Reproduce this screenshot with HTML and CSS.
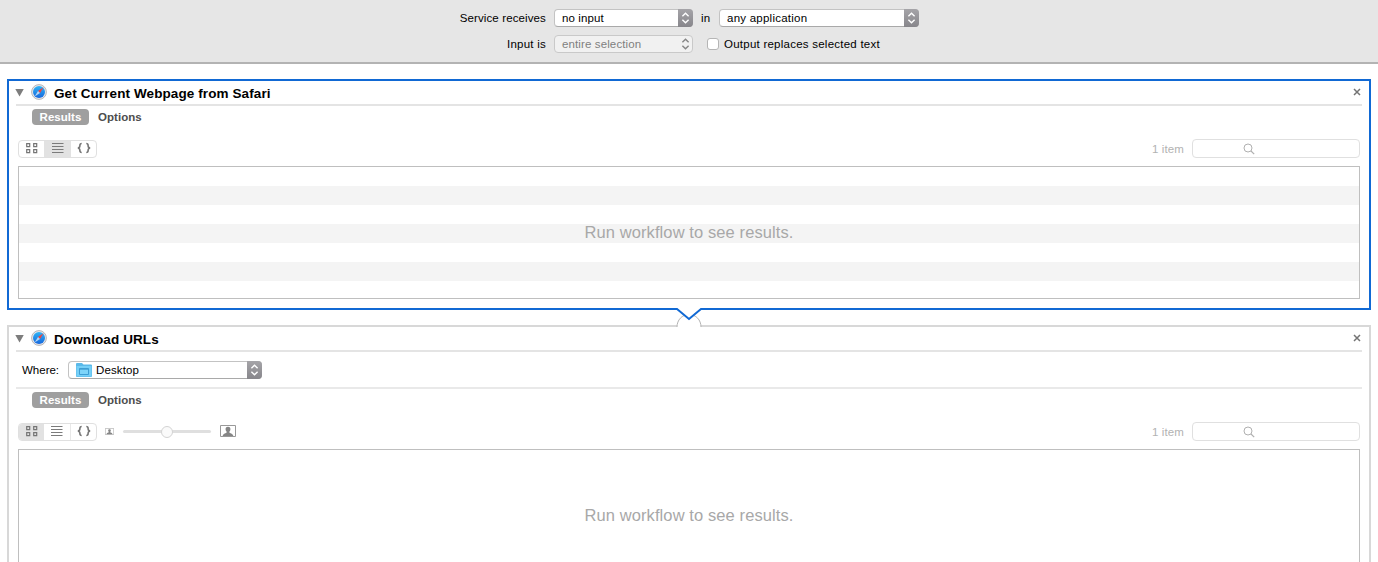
FILE: index.html
```html
<!DOCTYPE html>
<html lang="en">
<head>
<meta charset="utf-8">
<title>Automator</title>
<link rel="stylesheet" href="styles.css">
</head>
<body>
<svg class="defs" aria-hidden="true">
  <defs>
    <linearGradient id="blue" x1="0" y1="0" x2="0" y2="1"><stop offset="0" stop-color="#2fb4f6"/><stop offset="1" stop-color="#1767dc"/></linearGradient>
    <symbol id="safari" viewBox="0 0 16 16">
      <circle cx="8" cy="8" r="7.4" fill="#e9e9ec" stroke="#a5a5aa" stroke-width=".8"/>
      <circle cx="8" cy="8" r="6" fill="url(#blue)"/>
      <path d="M12.500 3.300 9 9 7 7z" fill="#f4433c"/>
      <path d="M3.700 12.600 7 7l2 2z" fill="#b5d5f5"/>
    </symbol>
    <symbol id="updown" viewBox="0 0 15 18"><path d="M4.4 7.3 7.5 4.3l3.1 3M4.4 10.7l3.1 3 3.1-3" fill="none" stroke="currentColor" stroke-width="1.4"/></symbol>
    <symbol id="grid" viewBox="0 0 12 12"><path d="M.7 1.700h3v3h-3zM7.700 1.700h3v3h-3zM.7 7.700h3v3h-3zM7.700 7.700h3v3h-3z" fill="none" stroke="#757575" stroke-width="1.200"/></symbol>
    <symbol id="list" viewBox="0 0 12 12"><path d="M0 1.500h11.500M0 4.500h11.500M0 7.500h11.500M0 10.500h11.500" stroke="#7b7b7b" stroke-width="1"/></symbol>
    <symbol id="braces" viewBox="0 0 14 12"><path d="M4.700 1.500C3 1.500 2.900 2 2.900 3.500S2.500 5.900.8 6c1.700.1 2.100 1 2.100 2.500s.1 2 1.800 2M9.300 1.500c1.700 0 1.800.5 1.800 2s.4 2.400 2.100 2.500c-1.700.1-2.100 1-2.100 2.500s-.1 2-1.800 2" fill="none" stroke="#777" stroke-width="1.600"/></symbol>
    <symbol id="search" viewBox="0 0 12 12"><circle cx="5" cy="5" r="4" fill="none" stroke="#b0b0b0"/><path d="m8 8 3.200 3.200" stroke="#b0b0b0" stroke-width="1.200"/></symbol>
    <symbol id="close" viewBox="0 0 8 8"><path d="m1 1 6 6M7 1 1 7" stroke="#747474" stroke-width="1.500"/></symbol>
    <symbol id="person" viewBox="0 0 16 12"><path d="M.5.5h15v11H.5z" fill="#fff" stroke="#999"/><path d="M8 1.800c1.900 0 2.500 1.200 2.400 2.600-.1 1.100-.5 1.700-1 2.200v.9c.2.700 3.600.8 3.900 3.500H2.700c.3-2.700 3.700-2.800 3.900-3.500v-.9c-.5-.5-.9-1.100-1-2.200C5.500 3 6.100 1.800 8 1.800z" fill="#858585"/></symbol>
  </defs>
</svg>

<header class="service">
  <div class="service-row">
    <span class="service-label">Service receives</span>
    <div class="popup input-popup"><span class="popup-text">no input</span><span class="stepper"><svg><use href="#updown"/></svg></span></div>
    <span class="in-label">in</span>
    <div class="popup app-popup"><span class="popup-text wide-text">any application</span><span class="stepper"><svg><use href="#updown"/></svg></span></div>
  </div>
  <div class="service-row">
    <span class="service-label wide-text">Input is</span>
    <div class="popup input-popup disabled"><span class="popup-text">entire selection</span><span class="stepper"><svg><use href="#updown"/></svg></span></div>
    <span class="checkbox"></span>
    <span class="check-label">Output replaces selected text</span>
  </div>
</header>

<main class="workflow">
  <section class="action selected">
    <div class="action-header">
      <span class="triangle"></span>
      <svg class="app-icon"><use href="#safari"/></svg>
      <h2 class="title">Get Current Webpage from Safari</h2>
      <svg class="close"><use href="#close"/></svg>
    </div>
    <div class="tabs"><span class="tab active">Results</span><span class="tab">Options</span></div>
    <div class="toolbar">
      <div class="segments">
        <span class="segment"><svg class="icon"><use href="#grid"/></svg></span>
        <span class="segment middle on"><svg class="icon"><use href="#list"/></svg></span>
        <span class="segment"><svg class="icon braces"><use href="#braces"/></svg></span>
      </div>
      <span class="count">1 item</span>
      <div class="search"><svg><use href="#search"/></svg></div>
    </div>
    <div class="results striped"><span class="placeholder">Run workflow to see results.</span></div>
    <svg class="connector" viewBox="0 0 28 19">
      <path d="M2 19C2 12 7 6.500 14 6.500S26 12 26 19" fill="#fff" stroke="#b4b4b4"/>
      <path d="M0 0h28v1h-2.500L14 11 2.500 1H0z" fill="#fff"/>
      <path d="M0 1h2L14 11 26 1h2" fill="none" stroke="#1169d4" stroke-width="2"/>
    </svg>
  </section>

  <section class="action">
    <div class="action-header">
      <span class="triangle"></span>
      <svg class="app-icon"><use href="#safari"/></svg>
      <h2 class="title">Download URLs</h2>
      <svg class="close"><use href="#close"/></svg>
    </div>
    <div class="parameters">
      <span class="where">Where:</span>
      <div class="popup folder-popup">
        <svg class="folder" viewBox="0 0 16 14"><path d="M0 1Q0 0 1 0h5l1.500 1.500H15q1 0 1 1V13q0 1-1 1H1q-1 0-1-1z" fill="#5ab9e9"/><path d="M.5 3h15v10.500H.5z" fill="#75cff7"/><path d="M3.500 5.500h9v6h-9zM3.500 6.200h9" fill="#7dd4f9" stroke="#3d9dd3"/></svg>
        <span class="popup-text">Desktop</span><span class="stepper"><svg><use href="#updown"/></svg></span>
      </div>
    </div>
    <div class="tabs"><span class="tab active">Results</span><span class="tab">Options</span></div>
    <div class="toolbar">
      <div class="segments">
        <span class="segment on"><svg class="icon"><use href="#grid"/></svg></span>
        <span class="segment middle divided"><svg class="icon"><use href="#list"/></svg></span>
        <span class="segment"><svg class="icon braces"><use href="#braces"/></svg></span>
      </div>
      <svg class="person-small"><use href="#person"/></svg>
      <div class="slider"><span class="thumb"></span></div>
      <svg class="person-large"><use href="#person"/></svg>
      <span class="count">1 item</span>
      <div class="search"><svg><use href="#search"/></svg></div>
    </div>
    <div class="results"><span class="placeholder">Run workflow to see results.</span></div>
  </section>
</main>
</body>
</html>
```
FILE: styles.css
```css
* { box-sizing: border-box; }
html, body { height: 100%; }
body {
  margin: 0;
  overflow: hidden;
  background: #fff;
  color: #000;
  font: 11.5px/18px "Liberation Sans", Arial, sans-serif;
  letter-spacing: .12px;
  white-space: nowrap;
}
svg { display: block; }
.defs { position: absolute; width: 0; height: 0; }

.service {
  display: flex;
  flex-direction: column;
  gap: 8px;
  height: 64px;
  padding: 9px 0 0 440px;
  background: #e6e6e6;
  border-bottom: 2px solid #b3b3b3;
}
.service-row { display: flex; align-items: center; height: 18px; }
.service-label { width: 106px; margin-right: 8px; text-align: right; }
.in-label { width: 26px; padding-left: 8px; }
.check-label { margin-left: 5px; letter-spacing: .24px; }
.wide-text { letter-spacing: .24px; }
.checkbox {
  width: 12px;
  height: 12px;
  margin-left: 14px;
  background: #fff;
  border: 1px solid #b5b5b5;
  border-radius: 3px;
}

.popup {
  display: flex;
  align-items: center;
  height: 18px;
  background: #fff;
  border: 1px solid #c3c3c3;
  border-bottom-color: #a9a9a9;
  border-radius: 4px;
}
.popup-text { flex: 1; padding-left: 7px; }
.stepper {
  width: 15px;
  height: 18px;
  margin: -1px;
  color: #fff;
  background: linear-gradient(#a5a4a8, #87868b);
  border-radius: 0 4px 4px 0;
}
.stepper svg { width: 15px; height: 18px; }
.input-popup { width: 139px; }
.app-popup { width: 200px; }
.folder-popup { width: 194px; }
.disabled { color: #7f7f7f; background: #f1f1f1; border-color: #c9c9c9; }
.disabled .stepper { color: #858585; background: none; }

.workflow { padding: 15px 7px 0; }
.action {
  position: relative;
  height: 260px;
  padding: 0 7px;
  border: 2px solid #d8d8d8;
}
.action.selected { z-index: 1; height: 231px; margin-bottom: 15px; border-color: #1169d4; }
.action-header {
  display: flex;
  align-items: center;
  height: 25px;
  border-bottom: 2px solid #e4e4e4;
}
.triangle {
  width: 9px;
  height: 8px;
  margin-left: -1px;
  background: #7d7d7d;
  clip-path: polygon(0 0, 100% 0, 50% 100%);
}
.app-icon { width: 16px; height: 16px; margin: 0 7px 1px; }
.title { flex: 1; margin: 2px 0 0; font-size: 13.5px; font-weight: bold; line-height: 18px; letter-spacing: .1px; }
.close { width: 8px; height: 8px; margin: 0 1px 2px 0; }

.parameters {
  display: flex;
  align-items: center;
  height: 37px;
  padding-left: 6px;
  border-bottom: 2px solid #e9e9e9;
}
.where { width: 46px; letter-spacing: 0; }
.folder { width: 16px; height: 14px; margin-left: 7px; }
.folder-popup .popup-text { padding-left: 4px; }

.tabs { display: flex; height: 16px; margin: 3px 16px 14px; line-height: 16px; font-weight: bold; letter-spacing: .04px; }
.tab { width: 62px; padding-left: 9px; color: #4d4d4d; }
.tab.active { width: 57px; padding: 0; text-align: center; color: #fff; background: #9f9f9f; border-radius: 4px; }

.toolbar { display: flex; align-items: center; height: 19px; margin: 0 2px 8px; }
.segments {
  display: flex;
  align-self: flex-end;
  width: 79px;
  height: 18px;
  overflow: hidden;
  border: 1px solid #e0e0e0;
  border-radius: 4px;
}
.segment { display: flex; flex: 1; align-items: flex-start; justify-content: center; padding-top: 1px; }
.segment.middle { flex: 0 0 27px; }
.segment.on { background: #e2e2e2; }
.segment.divided { border-right: 1px solid #e8e8e8; }
.icon { width: 12px; height: 12px; }
.icon.braces { width: 14px; }
.person-small { width: 9px; height: 7px; margin-left: 8px; }
.slider {
  display: flex;
  justify-content: center;
  align-items: center;
  width: 88px;
  height: 3px;
  margin: 0 9px;
  background: #dfdfdf;
  border-radius: 2px;
}
.thumb { flex: none; width: 12px; height: 12px; background: #fafafa; border: 1px solid #d3d3d3; border-radius: 50%; }
.person-large { width: 16px; height: 12px; margin-bottom: 1px; }
.count { margin: 1px 8px 0 auto; color: #b2b2b2; }
.search { width: 168px; height: 19px; padding: 3px 0 0 50px; border: 1px solid #e0e0e0; border-radius: 4px; }
.search svg { width: 12px; height: 12px; }

.results {
  display: flex;
  align-items: center;
  justify-content: center;
  height: 133px;
  padding-bottom: 2px;
  margin: 0 2px;
  border: 1px solid #bfbfbf;
}
.striped { background: repeating-linear-gradient(#fff 0 19px, #f4f4f4 19px 38px); }
.placeholder { color: #a8a8a8; font-size: 16.5px; letter-spacing: .1px; }
.connector { position: absolute; left: 666px; top: 227px; width: 28px; height: 19px; }
```
